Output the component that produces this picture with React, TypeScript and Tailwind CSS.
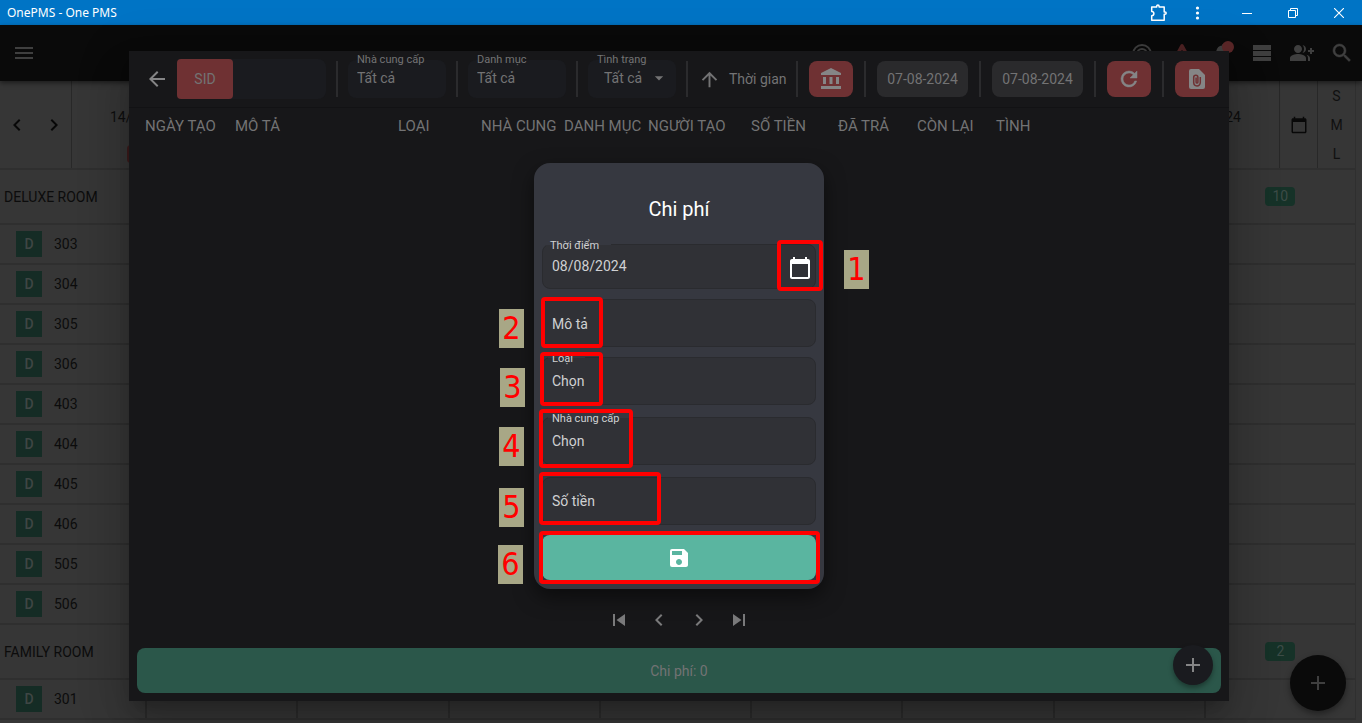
import {
  MdAccountBalance,
  MdAdd,
  MdArrowBack,
  MdArrowDropDown,
  MdArrowUpward,
  MdCalendarToday,
  MdChevronLeft,
  MdChevronRight,
  MdMenu,
  MdNotifications,
  MdSave,
  MdSkipNext,
  MdSkipPrevious,
} from "react-icons/md";

const deluxeRooms = ["303", "304", "305", "306", "403", "404", "405", "406", "505", "506"];
const familyRooms = ["301"];
const dayColumns = [0, 1, 2, 3, 4, 5, 6, 7];
const lastDay = dayColumns.length - 1;

function PuzzleIcon() {
  return (
    <svg viewBox="0 0 18 18" className="size-[18px]" fill="none" stroke="currentColor" strokeWidth="1.5" strokeLinejoin="round">
      <path d="M1.7 3h5V2.2a1.2 1.2 0 0 1 2.4 0V3h5.1v4.9h.8a1.2 1.2 0 0 1 0 2.4h-.8v5.9H1.7v-4.4a2.2 2.2 0 0 0 0-4.4z" />
    </svg>
  );
}

function RingIcon() {
  return (
    <svg viewBox="0 0 24 24" className="size-6" fill="none" stroke="currentColor" strokeWidth="2">
      <circle cx="12" cy="13" r="9" />
      <circle cx="12" cy="13" r="5" />
    </svg>
  );
}

function AlertIcon() {
  return (
    <svg viewBox="0 0 24 24" className="size-6" fill="currentColor">
      <path d="M12 3a1.6 1.6 0 0 1 1.4.8L22.6 20.5H1.4L10.6 3.8A1.6 1.6 0 0 1 12 3zM11 14h2V9.500h-2zM11 18h2v-2h-2z" />
    </svg>
  );
}

function BarsIcon() {
  return (
    <svg viewBox="0 0 24 24" className="size-6" fill="currentColor">
      <path d="M3 4h18v5H3zM3 10h18v5H3zM3 16h18v4H3z" />
    </svg>
  );
}

function GroupAddIcon() {
  return (
    <svg viewBox="0 0 24 24" className="size-6" fill="currentColor">
      <path d="M22 9V7h-2v2h-2v2h2v2h2v-2h2V9zM8 12c2.21 0 4-1.79 4-4s-1.79-4-4-4-4 1.79-4 4 1.79 4 4 4zm0 1c-2.67 0-8 1.34-8 4v3h16v-3c0-2.66-5.33-4-8-4zM12.51 4.05C13.43 5.11 14 6.49 14 8s-.57 2.89-1.49 3.95C14.47 11.7 16 10.04 16 8s-1.53-3.7-3.49-3.95zM16.53 13.83C17.42 14.66 18 15.7 18 17v3h2v-3c0-1.45-1.59-2.51-3.47-3.17z" />
    </svg>
  );
}

function SearchIcon() {
  return (
    <svg viewBox="0 0 24 24" className="size-6" fill="currentColor" stroke="currentColor" strokeWidth="0.5">
      <path d="M9.5 3A6.5 6.5 0 0 1 16 9.5c0 1.61-.59 3.09-1.56 4.23l.27.27h.79l5 5-1.500 1.500-5-5v-.79l-.27-.27A6.5 6.5 0 1 1 9.5 3zm0 2a4.500 4.500 0 1 0 0 9 4.500 4.500 0 0 0 0-9z" />
    </svg>
  );
}

function RefreshIcon() {
  return (
    <svg viewBox="0 0 24 24" className="size-6" fill="currentColor" stroke="currentColor" strokeWidth="0.5">
      <path d="M17.65 6.35A7.958 7.958 0 0 0 12 4a8 8 0 1 0 7.73 10h-2.08A5.99 5.99 0 0 1 12 18a6 6 0 1 1 0-12c1.66 0 3.14.69 4.22 1.78L13 11h7V4z" />
    </svg>
  );
}

function FileClipIcon() {
  return (
    <svg viewBox="0 0 24 24" className="size-6" fill="none">
      <path d="M14 2H6a2 2 0 0 0-2 2v16a2 2 0 0 0 2 2h12a2 2 0 0 0 2-2V8z" fill="currentColor" />
      <path d="M15.3 10v5.6a3.3 3.3 0 0 1-6.6 0V10.4a2.1 2.1 0 0 1 4.2 0v4.8a.9.9 0 0 1-1.8 0V10.6" stroke="#6f3133" strokeWidth="1.5" />
    </svg>
  );
}

function TitleBar() {
  return (
    <header className="flex h-[25px] shrink-0 items-center bg-[#0074c5] pr-3 text-white">
      <h1 className="flex-1 pl-[7px] font-['Noto_Sans',sans-serif] text-xs">OnePMS - One PMS</h1>
      <div className="flex items-center">
        <button aria-label="Extensions" className="mr-[22px]"><PuzzleIcon /></button>
        <button aria-label="More" className="mr-9 flex size-4 items-center justify-center">
          <svg viewBox="0 0 16 16" className="size-4" fill="currentColor">
            <circle cx="7.5" cy="3" r="1.6" /><circle cx="7.5" cy="8" r="1.6" /><circle cx="7.5" cy="13" r="1.6" />
          </svg>
        </button>
        <button aria-label="Minimize" className="mr-9">
          <svg viewBox="0 0 10 10" className="size-[10px]" stroke="currentColor"><path d="M0 5.5h10" /></svg>
        </button>
        <button aria-label="Restore" className="mr-9">
          <svg viewBox="0 0 10 10" className="size-[10px]" fill="none" stroke="currentColor"><path d="M.5 2.5h7v7h-7zM2.5 2.5v-2h7v7h-2" /></svg>
        </button>
        <button aria-label="Close" className="mr-[6px]">
          <svg viewBox="0 0 10 10" className="size-[10px]" stroke="currentColor" strokeWidth="1.1"><path d="M0 0l10 10M10 0L0 10" /></svg>
        </button>
      </div>
    </header>
  );
}

function AppBar() {
  return (
    <div className="relative flex h-14 shrink-0 items-center justify-between bg-[#0a0a0a] pr-2 pl-3 text-[#3f3f3f] shadow-[0_2px_5px_rgba(0,0,0,0.5)]">
      <button aria-label="Menu"><MdMenu size={24} /></button>
      <div className="flex items-center gap-4">
        <button aria-label="Status"><RingIcon /></button>
        <button aria-label="Warnings" className="text-[#4f2324]"><AlertIcon /></button>
        <button aria-label="Notifications" className="relative">
          <MdNotifications size={24} className="rotate-12" />
          <span className="absolute top-0 right-0 size-3 rounded-full bg-[#5c2829]" />
        </button>
        <button aria-label="List"><BarsIcon /></button>
        <button aria-label="Add guests"><GroupAddIcon /></button>
        <button aria-label="Search"><SearchIcon /></button>
      </div>
    </div>
  );
}

function DayHeader() {
  return (
    <div className="flex h-[89px] shrink-0 border-b-2 border-[#2f2f2f]">
      <div className="flex w-[72px] shrink-0 items-center justify-between border-r border-[#282828] px-[5px] text-[#080808]">
        <button aria-label="Previous"><MdChevronLeft size={24} /></button>
        <button aria-label="Next"><MdChevronRight size={24} /></button>
      </div>
      <div className="grid flex-1 grid-cols-8">
        {dayColumns.map((day) => (
          <div key={day} className="border-r border-[#282828] px-[38px] pt-[26px] text-sm text-[#0e0e0e]">
            {day === 0 && (
              <>
                <p>14/</p>
                <div className="mx-auto mt-[18px] h-[18px] w-10 rounded bg-[#3d1a1b]" />
              </>
            )}
            {day === lastDay && <p className="text-right">24</p>}
          </div>
        ))}
      </div>
      <button aria-label="Pick a day" className="flex w-[38px] shrink-0 items-center justify-center border-r border-[#282828] text-[#080808]">
        <MdCalendarToday size={18} />
      </button>
      <div className="flex w-[38px] shrink-0 flex-col items-center justify-around border-r border-[#2f2f2f] text-sm text-[#101010]">
        <button>S</button>
        <button>M</button>
        <button>L</button>
      </div>
    </div>
  );
}

function DayCells({ count }: { count?: string }) {
  return (
    <div className="grid flex-1 grid-cols-8 border-r border-[#2f2f2f]">
      {dayColumns.map((day) => (
        <div key={day} className="flex items-center justify-center border-l-2 border-[#2c2c2c]">
          {count && day === lastDay && (
            <span className="w-[30px] rounded bg-[#163228] text-center text-sm leading-[19px] text-[#3d4c47]">{count}</span>
          )}
        </div>
      ))}
    </div>
  );
}

function RoomGroup({ name, count, rooms }: { name: string; count: string; rooms: string[] }) {
  return (
    <section>
      <div className="flex h-[55px] border-b-2 border-[#2f2f2f]">
        <h2 className="flex w-[145px] shrink-0 items-center pl-1 text-sm text-[#0c0c0c]">{name}</h2>
        <DayCells count={count} />
      </div>
      {rooms.map((room) => (
        <div key={room} className="flex h-10 border-b-2 border-[#2f2f2f]">
          <div className="flex w-[145px] shrink-0 items-center gap-3 pl-4 text-sm text-[#0c0c0c]">
            <span className="flex size-[26px] items-center justify-center bg-[#152c25] font-medium text-[#3f4644]">D</span>
            {room}
          </div>
          <DayCells />
        </div>
      ))}
    </section>
  );
}

function Divider() {
  return <span className="h-9 w-0.5 shrink-0 bg-[#2b2b2d]" />;
}

const filterLabel = "absolute -top-1.5 left-1.5 rounded px-[3px] text-[11px] leading-3 whitespace-nowrap";

function FilterField({ id, label }: { id: string; label: string }) {
  return (
    <div className="relative w-[98px] shrink-0">
      <label htmlFor={id} className={filterLabel}>{label}</label>
      <input id={id} defaultValue="Tất cả" className="block h-[38px] w-full rounded-lg bg-[#1a1b1f] px-[9px] pb-0.5 text-sm outline-none" />
    </div>
  );
}

const redButton = "flex h-9 w-11 shrink-0 items-center justify-center rounded-lg bg-[#6f3133] text-[#858586]";

const columns = [
  { title: "NGÀY TẠO", width: "w-[90px]" },
  { title: "MÔ TẢ", width: "w-[163px]" },
  { title: "LOẠI", width: "w-[83px]" },
  { title: "NHÀ CUNG", width: "w-[83px]" },
  { title: "DANH MỤC", width: "w-[84px]" },
  { title: "NGƯỜI TẠO", width: "w-[103px]" },
  { title: "SỐ TIỀN", width: "w-[87px]" },
  { title: "ĐÃ TRẢ", width: "w-[79px]" },
  { title: "CÒN LẠI", width: "w-[79px]" },
  { title: "TÌNH", width: "w-auto" },
];

function ExpenseList() {
  return (
    <main className="flex w-full max-w-[1100px] flex-col bg-[#171719] text-[#737374] shadow-[0_11px_15px_-7px_rgba(0,0,0,0.2),0_24px_38px_3px_rgba(0,0,0,0.14),0_9px_46px_8px_rgba(0,0,0,0.12)]">
      <div className="flex h-[57px] shrink-0 items-center border-b border-[#121214] pr-[10px] pl-4 text-sm">
        <button aria-label="Back" className="mr-2 text-[#858586]"><MdArrowBack size={24} /></button>
        <div className="mr-[10px] flex w-[149px] items-center rounded-lg bg-[#1a1b1f]">
          <button className="h-10 w-14 shrink-0 rounded bg-[#6f3133]">SID</button>
          <input aria-label="SID" className="h-[38px] w-full min-w-0 bg-transparent px-2 outline-none" />
        </div>
        <div className="flex items-center gap-[10px]">
          <Divider />
          <FilterField id="filter-supplier" label="Nhà cung cấp" />
          <Divider />
          <FilterField id="filter-category" label="Danh mục" />
          <Divider />
          <div className="relative w-[88px]">
            <label htmlFor="filter-status" className={filterLabel}>Tình trạng</label>
            <select id="filter-status" className="block h-[38px] w-full appearance-none rounded-lg bg-[#1a1b1f] pb-0.5 pl-4 text-sm outline-none">
              <option>Tất cả</option>
            </select>
            <MdArrowDropDown size={20} className="pointer-events-none absolute top-2 right-[7px]" />
          </div>
          <Divider />
          <button className="flex items-center gap-2"><MdArrowUpward size={23} />Thời gian</button>
        </div>
        <div className="ml-auto flex items-center gap-[11px]">
          <Divider />
          <button aria-label="Bank" className={redButton}><MdAccountBalance size={24} /></button>
          <Divider />
          <button className="h-9 w-[91px] shrink-0 rounded-lg bg-[#2a2a2c]">07-08-2024</button>
          <Divider />
          <button className="h-9 w-[91px] shrink-0 rounded-lg bg-[#2a2a2c]">07-08-2024</button>
          <Divider />
          <button aria-label="Refresh" className={redButton}><RefreshIcon /></button>
          <Divider />
          <button aria-label="Export" className={redButton}><FileClipIcon /></button>
        </div>
      </div>
      <div className="min-h-0 flex-1 pt-1 pl-4">
        <table className="w-full table-fixed text-left text-[15px]">
          <thead>
            <tr>
              {columns.map((column) => (
                <th key={column.title} className={`${column.width} h-7 font-normal whitespace-nowrap`}>{column.title}</th>
              ))}
            </tr>
          </thead>
        </table>
      </div>
      <nav className="flex h-14 shrink-0 items-center justify-center gap-4 text-[#7a7a7b]">
        <button aria-label="First page"><MdSkipPrevious size={24} /></button>
        <button aria-label="Previous page"><MdChevronLeft size={24} /></button>
        <button aria-label="Next page"><MdChevronRight size={24} /></button>
        <button aria-label="Last page"><MdSkipNext size={24} /></button>
      </nav>
      <footer className="relative mx-2 mb-2 flex h-[45px] shrink-0 items-center justify-center rounded-lg bg-[#2b574a] text-sm">
        Chi phí: 0
        <button aria-label="Add expense" className="absolute -top-[3px] right-2 flex size-10 items-center justify-center rounded-full bg-[#1a1b1f] text-[#858586] shadow-[0_3px_5px_rgba(0,0,0,0.35)]">
          <MdAdd size={24} />
        </button>
      </footer>
    </main>
  );
}

const fieldBox = "block w-full rounded-lg border border-[#2a2b2f] bg-[#303136] pl-[9px] text-sm text-[#cfd0d2] placeholder-[#cfd0d2] outline-none";
const fieldLabel = "absolute -top-1 bg-linear-to-b from-[#363840] from-40% to-[#303136] to-40% pr-3 pl-1 text-[11px] leading-3 text-[#cfd0d2]";

function Frame({ className }: { className: string }) {
  return <span className={`pointer-events-none absolute rounded-sm border-4 border-[#ff0000] ${className}`} />;
}

function Callout({ value, className }: { value: string; className: string }) {
  return (
    <span className={`absolute flex h-[39px] w-[25px] items-center justify-center bg-[#a8a786] pb-0.5 font-['DejaVu_Sans_Condensed','DejaVu_Sans',sans-serif] text-[32px] leading-none text-[#ff0000] ${className}`}>
      {value}
    </span>
  );
}

function ExpenseDialog() {
  return (
    <div role="dialog" aria-labelledby="expense-title" className="relative w-[290px] rounded-2xl bg-[#363840] px-2 pb-[9px] shadow-[0_8px_20px_rgba(0,0,0,0.5)]">
      <h2 id="expense-title" className="pt-[30px] pb-[19px] text-center text-xl leading-8 text-white">Chi phí</h2>
      <form className="flex flex-col" onSubmit={(event) => event.preventDefault()}>
        <div className="relative mb-[10px]">
          <label htmlFor="expense-date" className={`${fieldLabel} left-1`}>Thời điểm</label>
          <input id="expense-date" defaultValue="08/08/2024" className={`${fieldBox} h-[45px] pb-0.5`} />
          <button type="button" aria-label="Pick a date" className="absolute top-3 right-1 text-white"><MdCalendarToday size={24} /></button>
        </div>
        <input aria-label="Mô tả" placeholder="Mô tả" className={`${fieldBox} mb-[10px] h-12 pt-0.5`} />
        <div className="relative mb-3">
          <label htmlFor="expense-kind" className={`${fieldLabel} left-1.5`}>Loại</label>
          <input id="expense-kind" defaultValue="Chọn" className={`${fieldBox} h-12`} />
        </div>
        <div className="relative mb-3">
          <label htmlFor="expense-supplier" className={`${fieldLabel} left-1.5`}>Nhà cung cấp</label>
          <input id="expense-supplier" defaultValue="Chọn" className={`${fieldBox} h-12`} />
        </div>
        <input aria-label="Số tiền" placeholder="Số tiền" className={`${fieldBox} mb-[10px] h-12`} />
        <button aria-label="Save" className="flex h-[45px] items-center justify-center rounded-lg bg-[#5ab5a0] text-white"><MdSave size={24} /></button>
      </form>
      <Frame className="top-[77px] left-[243px] h-[51px] w-[46px]" />
      <Frame className="top-[134px] left-[7px] h-[51px] w-[62px]" />
      <Frame className="top-[189px] left-[6px] h-[54px] w-[63px]" />
      <Frame className="top-[246px] left-[5px] h-[59px] w-[94px]" />
      <Frame className="top-[309px] left-[5px] h-[53px] w-[122px]" />
      <Frame className="top-[368px] left-[5px] h-[53px] w-[281px]" />
      <Callout value="1" className="top-[87px] left-[310px]" />
      <Callout value="2" className="top-[146px] -left-[35px]" />
      <Callout value="3" className="top-[205px] -left-[34px]" />
      <Callout value="4" className="top-[264px] -left-[35px]" />
      <Callout value="5" className="top-[325px] -left-[35px]" />
      <Callout value="6" className="top-[382px] -left-[36px]" />
    </div>
  );
}

export default function App() {
  return (
    <div className="flex h-screen flex-col overflow-hidden bg-[#363636] font-[Roboto,sans-serif]">
      <TitleBar />
      <div className="relative flex min-h-0 flex-1 flex-col">
        <AppBar />
        <div className="min-h-0 flex-1 overflow-hidden pr-[6px]">
          <DayHeader />
          <RoomGroup name="DELUXE ROOM" count="10" rooms={deluxeRooms} />
          <RoomGroup name="FAMILY ROOM" count="2" rooms={familyRooms} />
        </div>
        <button aria-label="Add booking" className="absolute right-4 bottom-3 flex size-14 items-center justify-center rounded-full bg-[#0a0a0a] text-[#3f3f3f] shadow-[0_3px_6px_rgba(0,0,0,0.4)]">
          <MdAdd size={24} />
        </button>
        <div className="absolute inset-0 flex justify-center pt-[26px] pr-1 pb-[22px]">
          <ExpenseList />
        </div>
        <div className="absolute inset-0 flex items-center justify-center pt-[26px] pr-1 pb-[22px]">
          <ExpenseDialog />
        </div>
      </div>
    </div>
  );
}
